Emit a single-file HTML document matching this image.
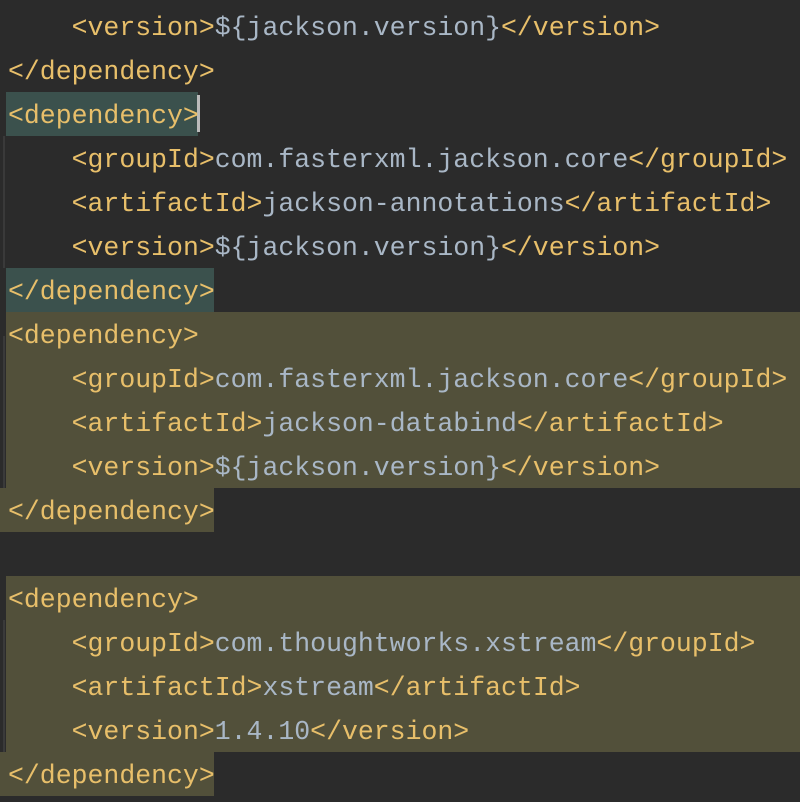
<!DOCTYPE html>
<html><head><style>
html,body{margin:0;padding:0;background:#2b2b2b;width:800px;height:802px;overflow:hidden}
.bg{position:absolute}
pre{position:absolute;left:8px;top:6px;margin:0;font-family:"Liberation Mono",monospace;font-size:26.5px;line-height:44px;color:#a9b7c6}
.t{color:#e8bf6a}
</style></head><body>
<div class="bg" style="left:6px;top:92px;width:192px;height:44px;background:#3b514d"></div>
<div class="bg" style="left:197px;top:95px;width:3px;height:37px;background:#bbbbbb"></div>
<div class="bg" style="left:3px;top:136px;width:2px;height:132px;background:#3a3a3a"></div>
<div class="bg" style="left:6px;top:268px;width:208px;height:44px;background:#3b514d"></div>
<div class="bg" style="left:6px;top:312px;width:794px;height:176px;background:#52503a"></div>
<div class="bg" style="left:0;top:336px;width:6px;height:152px;background:#2b2b2b"></div>
<div class="bg" style="left:3px;top:336px;width:2px;height:152px;background:#3a3a3a"></div>
<div class="bg" style="left:0;top:488px;width:214px;height:44px;background:#52503a"></div>
<div class="bg" style="left:6px;top:576px;width:794px;height:176px;background:#52503a"></div>
<div class="bg" style="left:0;top:620px;width:6px;height:132px;background:#2b2b2b"></div>
<div class="bg" style="left:3px;top:620px;width:2px;height:132px;background:#3a3a3a"></div>
<div class="bg" style="left:0;top:752px;width:214px;height:44px;background:#52503a"></div>
<pre>    <span class="t">&lt;version&gt;</span>${jackson.version}<span class="t">&lt;/version&gt;</span>
<span class="t">&lt;/dependency&gt;</span>
<span class="t">&lt;dependency&gt;</span>
    <span class="t">&lt;groupId&gt;</span>com.fasterxml.jackson.core<span class="t">&lt;/groupId&gt;</span>
    <span class="t">&lt;artifactId&gt;</span>jackson-annotations<span class="t">&lt;/artifactId&gt;</span>
    <span class="t">&lt;version&gt;</span>${jackson.version}<span class="t">&lt;/version&gt;</span>
<span class="t">&lt;/dependency&gt;</span>
<span class="t">&lt;dependency&gt;</span>
    <span class="t">&lt;groupId&gt;</span>com.fasterxml.jackson.core<span class="t">&lt;/groupId&gt;</span>
    <span class="t">&lt;artifactId&gt;</span>jackson-databind<span class="t">&lt;/artifactId&gt;</span>
    <span class="t">&lt;version&gt;</span>${jackson.version}<span class="t">&lt;/version&gt;</span>
<span class="t">&lt;/dependency&gt;</span>

<span class="t">&lt;dependency&gt;</span>
    <span class="t">&lt;groupId&gt;</span>com.thoughtworks.xstream<span class="t">&lt;/groupId&gt;</span>
    <span class="t">&lt;artifactId&gt;</span>xstream<span class="t">&lt;/artifactId&gt;</span>
    <span class="t">&lt;version&gt;</span>1.4.10<span class="t">&lt;/version&gt;</span>
<span class="t">&lt;/dependency&gt;</span></pre>
</body></html>
